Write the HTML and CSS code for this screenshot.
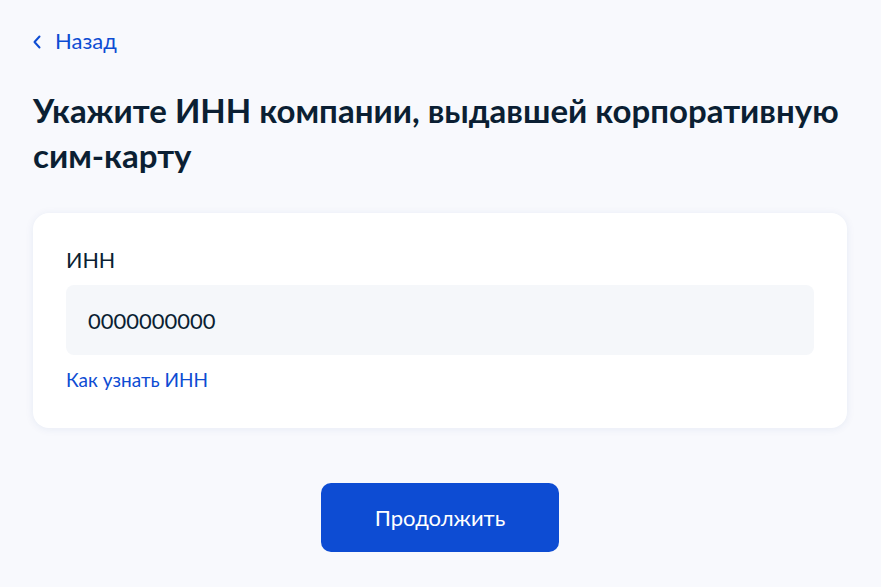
FILE: index.html
```html
<!DOCTYPE html>
<html lang="ru">
<head>
<meta charset="utf-8">
<link rel="stylesheet" href="styles.css">
</head>
<body>
<main class="page">
  <a class="back" href="#">
    <svg class="back-icon" width="8" height="14" viewBox="0 0 8 14"><path d="M6.5 1.5 L1.5 7 L6.5 12.5" fill="none" stroke="currentColor" stroke-width="2" stroke-linecap="round" stroke-linejoin="round"/></svg>
    <span>Назад</span>
  </a>
  <h1 class="title">Укажите ИНН компании, выдавшей корпоративную <span class="nowrap">сим-карту</span></h1>
  <section class="card">
    <label class="label">ИНН</label>
    <div class="input">0000000000</div>
    <a class="hint" href="#">Как узнать ИНН</a>
  </section>
  <div class="actions">
    <button class="btn">Продолжить</button>
  </div>
</main>
</body>
</html>
```
FILE: styles.css
```css
html, body {
  margin: 0;
  padding: 0;
  background: #f8f9fd;
  font-family: Lato, "Noto Sans", sans-serif;
  color: #0b1f33;
}
.page {
  padding: 29px 34px 0 33px;
  display: flex;
  flex-direction: column;
}
.back {
  display: flex;
  align-items: center;
  gap: 14px;
  color: #0d4cd3;
  text-decoration: none;
  font-size: 22px;
  line-height: 24px;
  height: 24px;
}
.back-icon { display: block; margin-top: 2px; }
.title {
  margin: 35px -10px 0 0;
  font-size: 33px;
  line-height: 45px;
  font-weight: 700;
}
.nowrap { white-space: nowrap; }
.card {
  margin-top: 35px;
  background: #fff;
  border-radius: 16px;
  box-shadow: 0 1px 8px rgba(30, 60, 140, 0.08);
  padding: 34px 33px 36px;
  display: flex;
  flex-direction: column;
}
.label {
  font-size: 21.5px;
  line-height: 26px;
}
.input {
  margin-top: 12px;
  height: 70px;
  background: #f5f7fa;
  border-radius: 8px;
  padding: 0 22px;
  display: flex;
  align-items: center;
  font-size: 22px;
}
.hint {
  margin-top: 13px;
  color: #0d4cd3;
  text-decoration: none;
  font-size: 19px;
  line-height: 24px;
}
.actions {
  margin-top: 55px;
  display: flex;
  justify-content: center;
}
.btn {
  width: 238px;
  height: 69px;
  border: 0;
  border-radius: 10px;
  background: #0d4cd3;
  color: #fff;
  font-family: Lato, "Noto Sans", sans-serif;
  font-size: 22px;
}
```
